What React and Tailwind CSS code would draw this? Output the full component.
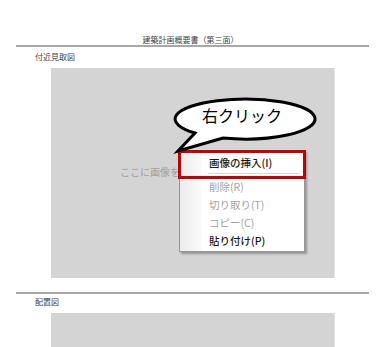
export default function App() {
  const items = [
    { t: "削除(R)", on: false },
    { t: "切り取り(T)", on: false },
    { t: "コピー(C)", on: false },
    { t: "貼り付け(P)", on: true },
  ];
  return (
    <div className="relative w-[385px] h-[347px] overflow-hidden bg-white font-['Noto_Sans_CJK_JP','Liberation_Sans',sans-serif]">
      <div className="pt-[35px]">
        <div className="h-[10px] leading-[10px] text-[8px] text-[#444] text-center pr-[4px]">
          建築計画概要書（第三面）
        </div>
        <div className="mx-[16px] h-[2px] bg-[#a8a8a8]" />
        <div className="mt-[5px] h-[10px] leading-[10px] text-[8px] text-[#444] pl-[35px]">
          付近見取図
        </div>
        <div className="mt-[6px] ml-[51px] w-[284px] h-[210px] bg-[#d4d4d4] border-r border-[#e4e4e4]">
          <div className="pt-[98px] pl-[69px] text-[10px] leading-[12px] text-[#a0a0a0] whitespace-nowrap">
            ここに画像を挿入
          </div>
        </div>
        <div className="mt-[14px] mx-[16px] h-[2px] bg-[#a8a8a8]" />
        <div className="mt-[3px] h-[10px] leading-[10px] text-[8px] text-[#444] pl-[35px]">
          配置図
        </div>
        <div className="mt-[6px] ml-[51px] w-[284px] h-[40px] bg-[#d4d4d4] border-r border-[#e4e4e4]" />
      </div>

      {/* context menu */}
      <div className="absolute left-[179px] top-[150px] w-[126px] h-[102px] bg-white border border-[#979797] shadow-[2px_2px_2px_rgba(0,0,0,0.3)] flex">
        <div className="absolute left-0 top-0 bottom-0 w-[22px] bg-gradient-to-r from-[#ececec] to-[#fbfbfb]" />
        <div className="relative flex flex-col w-full pt-[3px]">
          <div className="h-[18px] leading-[18px] pl-[29px] text-[10.5px] font-medium text-[#1a1a1a] whitespace-nowrap">
            画像の挿入(I)
          </div>
          <div className="mt-[1px] ml-[28px] mr-[5px] h-[1px] bg-[#d5d5d5]" />
          <div className="mt-[4px] flex flex-col">
            {items.map((it) => (
              <div
                key={it.t}
                className={
                  it.on
                    ? "h-[18px] leading-[18px] pl-[29px] text-[10.5px] font-medium text-[#1a1a1a] whitespace-nowrap"
                    : "h-[18px] leading-[18px] pl-[29px] text-[10.5px] text-[#a3a3a3] whitespace-nowrap"
                }
              >
                {it.t}
              </div>
            ))}
          </div>
        </div>
      </div>

      {/* red highlight */}
      <div className="absolute left-[178px] top-[150px] w-[128px] h-[29px] border-[3px] border-[#c40000]" />

      {/* speech balloon */}
      <svg className="absolute left-[170px] top-[94px]" width="150" height="62" viewBox="0 0 150 62">
        <path
          d="M 25 39 A 70 20 0 1 1 53 44 L 8 57 Z"
          fill="#ffffff"
          stroke="#000000"
          strokeWidth="3"
          strokeLinejoin="miter"
        />
      </svg>
      <div className="absolute left-[202px] top-[105px] h-[20px] leading-[20px] text-[16px] text-black whitespace-nowrap">
        右クリック
      </div>
    </div>
  );
}
